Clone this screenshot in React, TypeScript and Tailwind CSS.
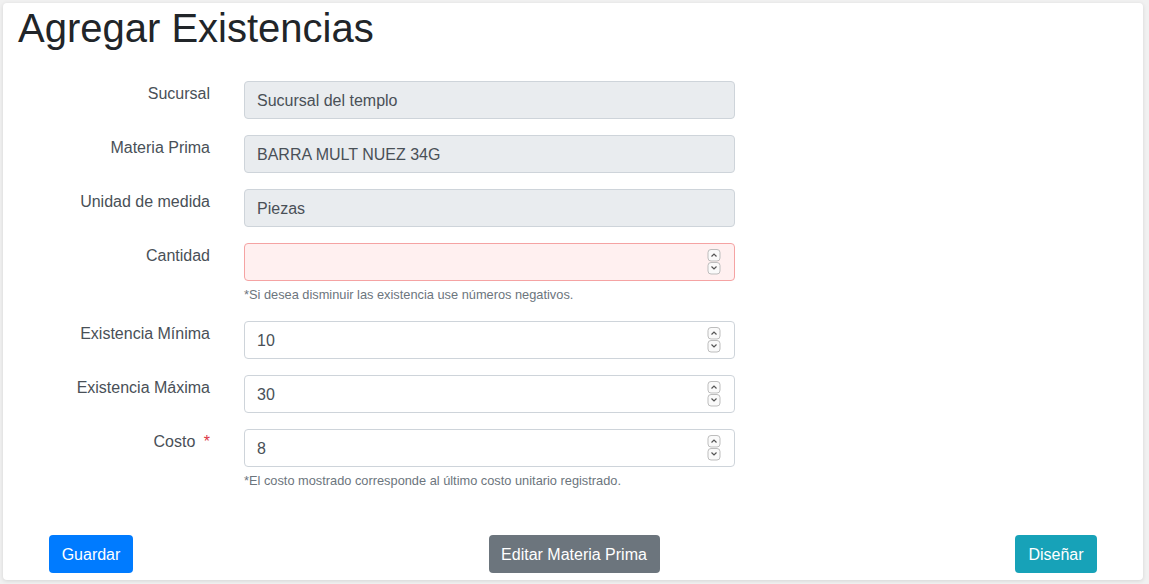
import type { ReactNode } from "react";

function Spinner() {
  return (
    <svg width="14" height="27" viewBox="0 0 14 27" className="shrink-0">
      <rect x="1" y="0.5" width="12" height="11.5" rx="3" fill="#fafafa" stroke="#bdbdbd" />
      <path d="M4.5 7.5 L7 5 L9.5 7.5" fill="none" stroke="#555" strokeWidth="1.2" />
      <rect x="1" y="13.5" width="12" height="11.5" rx="3" fill="#fafafa" stroke="#bdbdbd" />
      <path d="M4.5 17.5 L7 20 L9.5 17.5" fill="none" stroke="#555" strokeWidth="1.2" />
    </svg>
  );
}

function Row({
  label,
  children,
  help,
}: {
  label: ReactNode;
  children: ReactNode;
  help?: string;
}) {
  return (
    <div className="mb-4 flex">
      <div className="w-[207px] pt-px text-right text-[16px] leading-6 text-[#495057]">{label}</div>
      <div className="ml-[34px] w-[491px]">
        {children}
        {help && <p className="mt-1 text-[12.8px] leading-[20px] text-[#6c757d]">{help}</p>}
      </div>
    </div>
  );
}

function ReadOnly({ value }: { value: string }) {
  return (
    <div className="flex h-[38px] items-center rounded border border-[#ced4da] bg-[#e9ecef] px-3 pt-px text-[16px] text-[#495057]">
      {value}
    </div>
  );
}

function NumberBox({ value, invalid }: { value: string; invalid?: boolean }) {
  return (
    <div
      className={
        invalid
          ? "flex h-[38px] items-center justify-between rounded border border-[#f5a3a3] bg-[#fff0f0] pl-3 pr-[13px] text-[16px] text-[#495057]"
          : "flex h-[38px] items-center justify-between rounded border border-[#ced4da] bg-white pl-3 pr-[13px] text-[16px] text-[#495057]"
      }
    >
      <span className="pt-px">{value}</span>
      <Spinner />
    </div>
  );
}

export default function App() {
  return (
    <div
      className="h-[584px] bg-[#f1f1f1] pt-[3px] pl-[3px] pr-[6px]"
      style={{ fontFamily: '"Liberation Sans", Arial, sans-serif' }}
    >
      <div className="flex h-[577px] flex-col rounded bg-white pt-px shadow-[0_1px_4px_rgba(0,0,0,0.12)]">
        <h1 className="ml-[15px] text-[40px] leading-[48px] text-[#212529]">Agregar Existencias</h1>

        <div className="mt-[29px]">
          <Row label="Sucursal">
            <ReadOnly value="Sucursal del templo" />
          </Row>
          <Row label="Materia Prima">
            <ReadOnly value="BARRA MULT NUEZ 34G" />
          </Row>
          <Row label="Unidad de medida">
            <ReadOnly value="Piezas" />
          </Row>
          <Row label="Cantidad" help="*Si desea disminuir las existencia use números negativos.">
            <NumberBox value="" invalid />
          </Row>
          <Row label="Existencia Mínima">
            <NumberBox value="10" />
          </Row>
          <Row label="Existencia Máxima">
            <NumberBox value="30" />
          </Row>
          <Row
            label={
              <>
                Costo <span className="ml-1 text-[#dc3545]">*</span>
              </>
            }
            help="*El costo mostrado corresponde al último costo unitario registrado."
          >
            <NumberBox value="8" />
          </Row>
        </div>

        <div className="mt-auto mb-[7px] flex justify-between px-[46px]">
          <button className="h-[38px] w-[84px] rounded bg-[#007bff] pt-px text-[16px] text-white">Guardar</button>
          <button className="h-[38px] w-[171px] rounded bg-[#6c757d] pt-px text-[16px] text-white">Editar Materia Prima</button>
          <button className="h-[38px] w-[82px] rounded bg-[#17a2b8] pt-px text-[16px] text-white">Diseñar</button>
        </div>
      </div>
    </div>
  );
}
